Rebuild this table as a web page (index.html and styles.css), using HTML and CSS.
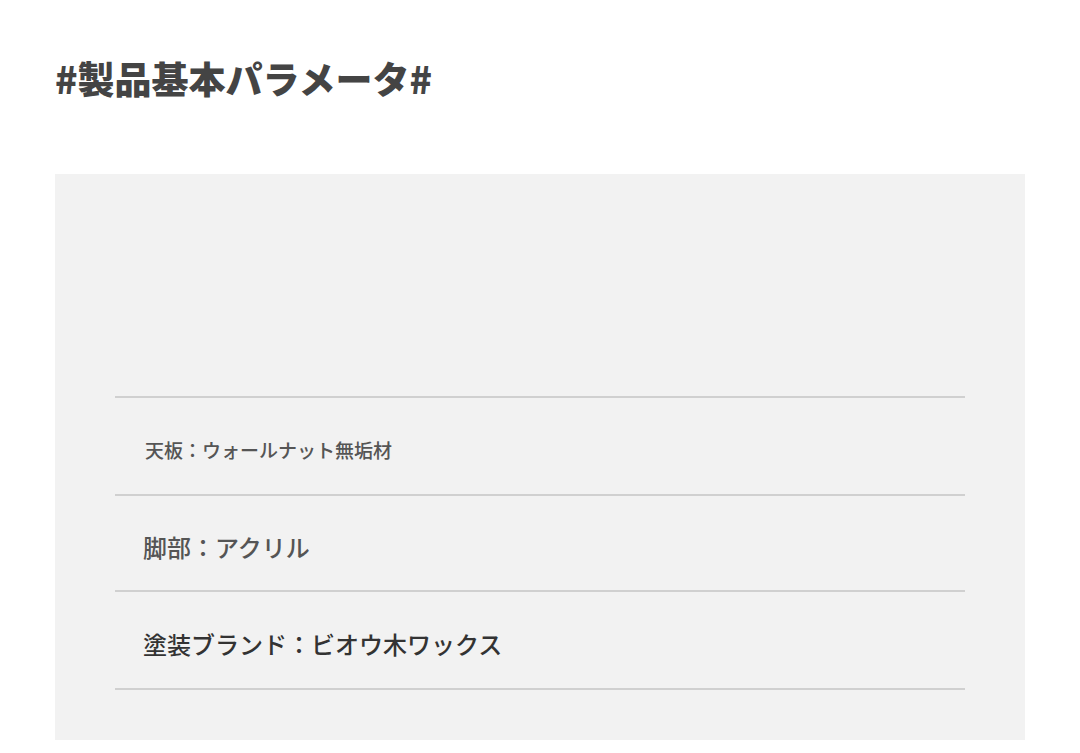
FILE: index.html
```html
<!DOCTYPE html>
<html lang="ja">
<head>
<meta charset="utf-8">
<link rel="stylesheet" href="styles.css">
</head>
<body>
<div class="page">
  <h2 class="title">#製品基本パラメータ#</h2>
  <section class="panel">
    <div class="spacer"></div>
    <ul class="specs">
      <li class="row small">天板：ウォールナット無垢材</li>
      <li class="row mid">脚部：アクリル</li>
      <li class="row big">塗装ブランド：ビオウ木ワックス</li>
    </ul>
  </section>
</div>
</body>
</html>
```
FILE: styles.css
```css
html, body {
  margin: 0;
  padding: 0;
  background: #ffffff;
}
.page {
  padding: 50px 55px 0 55px;
  font-family: "Noto Sans CJK JP", "Noto Sans", sans-serif;
}
.title {
  margin: 0;
  font-size: 37px;
  line-height: 56px;
  font-weight: 900;
  color: #444444;
  letter-spacing: 0;
}
.panel {
  margin-top: 68px;
  width: 970px;
  background: #f2f2f2;
  padding: 0 60px 50px 60px;
  box-sizing: border-box;
}
.spacer {
  height: 222px;
}
.specs {
  list-style: none;
  margin: 0;
  padding: 0;
  border-top: 2px solid #d0d0d0;
}
.row {
  display: flex;
  align-items: center;
  box-sizing: content-box;
  padding-left: 28px;
  padding-top: 7px;
  border-bottom: 2px solid #d0d0d0;
  font-weight: 500;
}
.small {
  height: 89px;
  padding-left: 30px;
  font-size: 19px;
  color: #555555;
}
.mid {
  height: 87px;
  font-size: 24px;
  color: #555555;
}
.big {
  height: 89px;
  font-size: 24px;
  color: #333333;
}
```
